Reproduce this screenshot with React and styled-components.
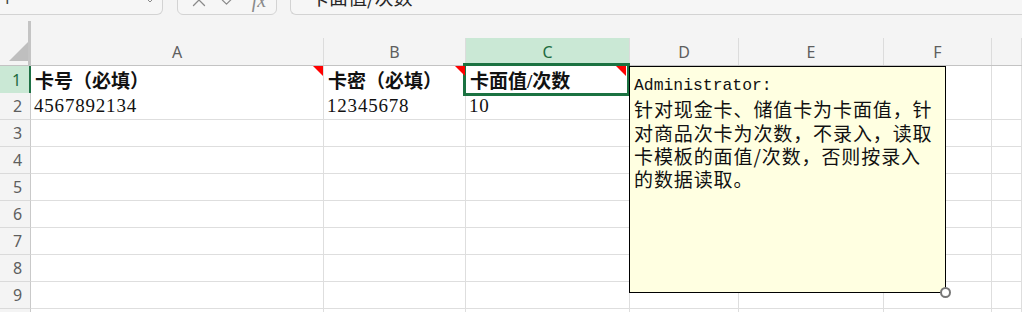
import React from 'react';
import styled, { createGlobalStyle } from 'styled-components';
import { X, Check, ChevronDown } from 'lucide-react';

const Global = createGlobalStyle`
  html, body { margin: 0; padding: 0; background: #f4f4f4; overflow: hidden; }
  body { font-family: "Noto Sans", "Noto Sans CJK SC", sans-serif; }
`;

const Page = styled.div`
  width: 1022px;
  height: 312px;
  overflow: hidden;
  background: #f4f4f4;
`;

const TopBar = styled.div`
  height: 15px;
  display: flex;
  align-items: flex-end;
  overflow: hidden;
  margin-bottom: 6px;
`;

const Box = styled.div`
  height: 30px;
  box-sizing: border-box;
  flex: ${(p) => p.$flex || 'none'};
  width: ${(p) => (p.$w ? `${p.$w}px` : 'auto')};
  margin-right: ${(p) => p.$mr || 0}px;
  border: 1px solid #d3d3d3;
  border-left: ${(p) => (p.$noLeft ? 'none' : '1px solid #d3d3d3')};
  border-right: ${(p) => (p.$noRight ? 'none' : '1px solid #d3d3d3')};
  border-radius: ${(p) => p.$radius || '6px'};
  background: #f6f6f6;
  display: flex;
  align-items: center;
  color: #3a3a3a;
`;

const NameText = styled.span`
  flex: 1;
  padding-left: 2px;
  font-size: 17px;
  color: #444;
  margin-top: -6px;
`;

const IconSlot = styled.span`
  display: flex;
  align-items: center;
  justify-content: center;
  width: ${(p) => p.$w || 33}px;
  margin-left: ${(p) => p.$ml || 0}px;
  color: #8a8a8a;
  margin-top: 0;
`;

const Fx = styled.span`
  font-family: "Liberation Serif", serif;
  font-style: italic;
  font-size: 20px;
  color: #8a8a8a;
`;

const FormulaText = styled.span`
  padding-left: 19px;
  font-family: "Noto Sans CJK SC", sans-serif;
  font-size: 19px;
  line-height: 20px;
  color: #262626;
  align-self: flex-start;
  padding-top: 1px;
`;

const Sheet = styled.div`
  position: relative;
`;

const COLS = '31px 293px 142px 164px 109px 145px 108px 1fr';

const HeaderRow = styled.div`
  display: grid;
  grid-template-columns: ${COLS};
  height: 45px;
  box-sizing: border-box;
  border-bottom: 1px solid #c3c3c3;
`;

const Corner = styled.div`
  box-sizing: border-box;
  border-right: 3px solid #c4c4c4;
  display: flex;
  align-items: flex-end;
  justify-content: flex-end;
  padding: 0 0 4px 0;
`;

const ColHeader = styled.div`
  display: flex;
  align-items: flex-end;
`;

const ColLabel = styled.div`
  flex: 1;
  height: 27px;
  box-sizing: border-box;
  border-right: 1px solid #dcdcdc;
  background: ${(p) => (p.$sel ? '#cae8d5' : 'transparent')};
  color: ${(p) => (p.$sel ? '#1d6b40' : '#5e5e5e')};
  display: flex;
  align-items: center;
  justify-content: center;
  font-family: "Noto Sans", sans-serif;
  font-size: 16px;
`;

const Row = styled.div`
  display: grid;
  grid-template-columns: ${COLS};
  height: 27px;
`;

const RowHeader = styled.div`
  box-sizing: border-box;
  border-right: ${(p) => (p.$sel ? '2px solid #1e7145' : '1px solid #c9c9c9')};
  border-bottom: 1px solid #dadada;
  background: ${(p) => (p.$sel ? '#cae8d5' : '#f4f4f4')};
  color: ${(p) => (p.$sel ? '#1d6b40' : '#5e5e5e')};
  display: flex;
  align-items: center;
  justify-content: center;
  padding-left: ${(p) => (p.$sel ? 4 : 5)}px;
  font-family: "Noto Sans", sans-serif;
  font-size: 16px;
`;

const Cell = styled.div`
  position: relative;
  box-sizing: border-box;
  border-right: 1px solid #dedede;
  border-bottom: 1px solid #dedede;
  background: #fff;
  display: flex;
  align-items: center;
  padding-left: ${(p) => (p.$num ? 3 : 4)}px;
  font-family: "Liberation Serif", "Noto Sans CJK SC", serif;
  font-size: 19px;
  font-weight: ${(p) => (p.$bold ? 700 : 400)};
  letter-spacing: ${(p) => (p.$num ? '0.8px' : '0')};
  color: #111;
  white-space: nowrap;
`;

const Indicator = styled.span`
  position: absolute;
  z-index: 3;
  top: 0;
  right: ${(p) => (p.$inset ? 3 : 0)}px;
  width: 0;
  height: 0;
  border-top: 10px solid #ff0000;
  border-left: 10px solid transparent;
`;

const Selection = styled.span`
  position: absolute;
  z-index: 2;
  top: -3px;
  left: -3px;
  right: -1px;
  bottom: -3px;
  border: 3px solid #1b7241;
  pointer-events: none;
`;

const Comment = styled.div`
  position: absolute;
  z-index: 4;
  left: 629px;
  top: 45px;
  width: 317px;
  height: 227px;
  box-sizing: border-box;
  border: 1px solid #000;
  background: #ffffe1;
  padding: 3px 4px;
  font-family: "Noto Sans CJK SC", sans-serif;
  font-size: 19px;
  letter-spacing: 0.9px;
  line-height: 23.3px;
  color: #111;
  white-space: pre;
`;

const Author = styled.span`
  font-family: "Liberation Mono", monospace;
  font-size: 16.4px;
  letter-spacing: 0;
`;

const Handle = styled.span`
  position: absolute;
  right: -6px;
  bottom: -6px;
  width: 11px;
  height: 11px;
  box-sizing: border-box;
  border-radius: 50%;
  border: 2px solid #777;
  background: #fff;
`;

const columns = ['A', 'B', 'C', 'D', 'E', 'F', 'G'];

const rows = [
  [
    { text: '卡号（必填）', bold: true, note: true },
    { text: '卡密（必填）', bold: true, note: true },
    { text: '卡面值/次数', bold: true, note: true, sel: true },
  ],
  [
    { text: '4567892134', num: true },
    { text: '12345678', num: true },
    { text: '10', num: true },
  ],
];

export default function App() {
  const rowCount = 10;
  return (
    <Page>
      <Global />
      <TopBar>
        <Box $w={163} $mr={14} $noLeft $radius="0 6px 6px 0">
          <NameText>1</NameText>
          <IconSlot $w={24}>
            <ChevronDown size={16} strokeWidth={1.5} />
          </IconSlot>
        </Box>
        <Box $w={100} $mr={13}>
          <IconSlot $w={30} $ml={6}>
            <X size={22} strokeWidth={1.4} />
          </IconSlot>
          <IconSlot $w={30}>
            <Check size={20} strokeWidth={1.4} />
          </IconSlot>
          <IconSlot $w={30}>
            <Fx>fx</Fx>
          </IconSlot>
        </Box>
        <Box $flex="1" $noRight $radius="6px 0 0 6px">
          <FormulaText>卡面值/次数</FormulaText>
        </Box>
      </TopBar>
      <Sheet>
        <HeaderRow>
          <Corner>
            <svg width="19" height="19" viewBox="0 0 19 19">
              <polygon points="19,0 19,19 0,19" fill="#bfbfbf" />
            </svg>
          </Corner>
          {columns.map((c) => (
            <ColHeader key={c}>
              <ColLabel $sel={c === 'C'}>{c === 'G' ? '' : c}</ColLabel>
            </ColHeader>
          ))}
        </HeaderRow>
        {Array.from({ length: rowCount }, (_, r) => (
          <Row key={r}>
            <RowHeader $sel={r === 0}>{r + 1}</RowHeader>
            {columns.map((c, ci) => {
              const data = rows[r] && rows[r][ci];
              return (
                <Cell key={c} $bold={data && data.bold} $num={data && data.num}>
                  {data ? data.text : ''}
                  {data && data.note && <Indicator $inset={data.sel} />}
                  {data && data.sel && <Selection />}
                </Cell>
              );
            })}
          </Row>
        ))}
        <Comment>
          <Author>Administrator:</Author>
          {'\n针对现金卡、储值卡为卡面值，针\n对商品次卡为次数，不录入，读取\n卡模板的面值/次数，否则按录入\n的数据读取。'}
          <Handle />
        </Comment>
      </Sheet>
    </Page>
  );
}
